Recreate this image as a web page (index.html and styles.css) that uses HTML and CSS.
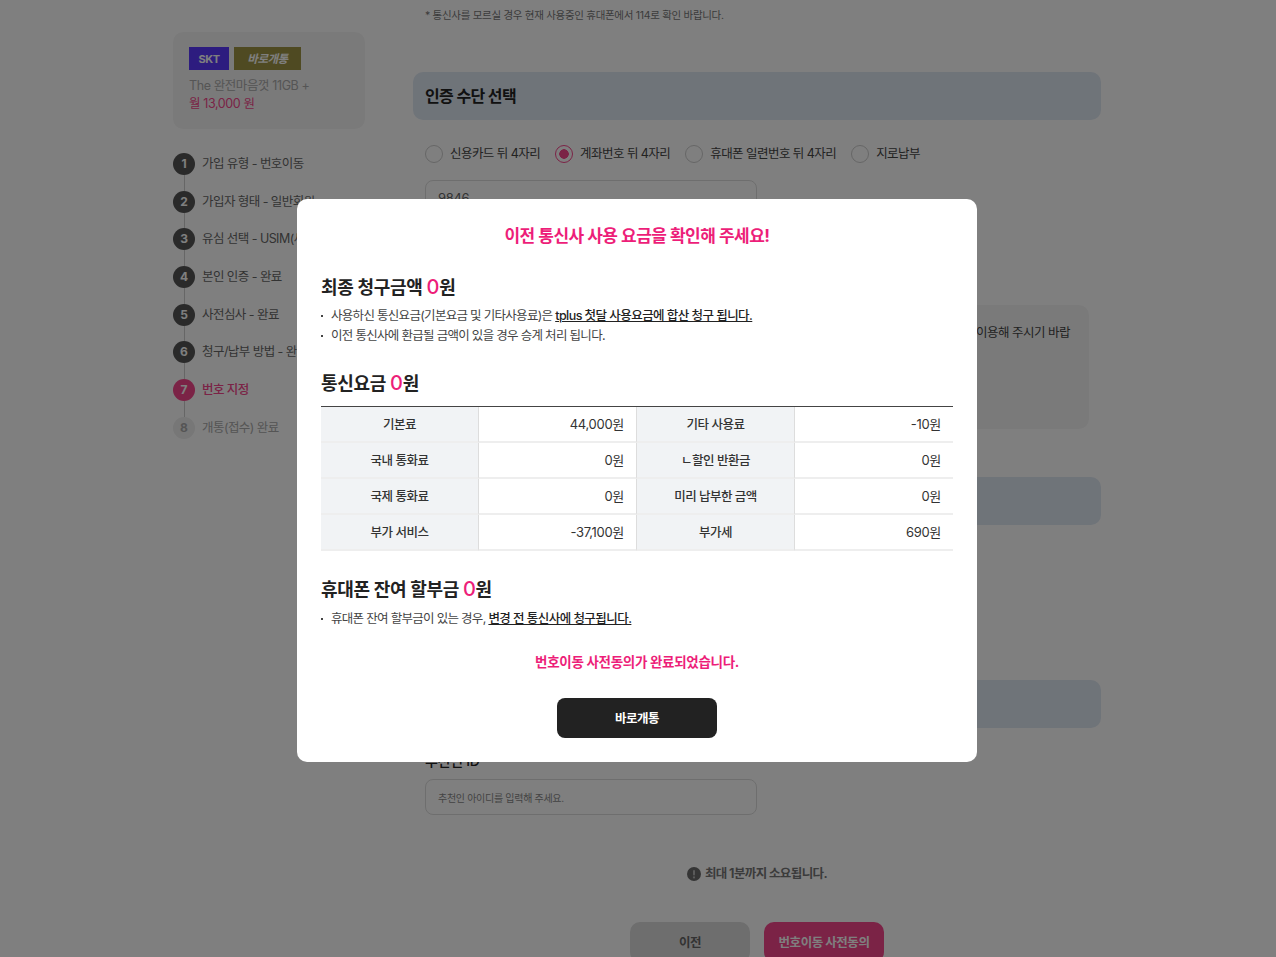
FILE: index.html
```html
<!DOCTYPE html>
<html lang="ko">
<head>
    <meta charset="UTF-8">
    <meta name="viewport" content="width=device-width, initial-scale=1.0">
    <title>번호이동 사전동의</title>
    <link rel="stylesheet" href="styles.css">
</head>
<body>
    <div class="page">
        <aside class="sidebar">
            <div class="plan-card">
                <div class="badges">
                    <span class="badge badge-carrier">SKT</span>
                    <span class="badge badge-type">바로개통</span>
                </div>
                <p class="plan-name">The 완전마음껏 11GB +</p>
                <p class="plan-price">월 13,000 원</p>
            </div>
            <ol class="steps">
                <li class="step"><span class="step-num">1</span>가입 유형 - 번호이동</li>
                <li class="step"><span class="step-num">2</span>가입자 형태 - 일반회원</li>
                <li class="step"><span class="step-num">3</span>유심 선택 - USIM(새 구매)</li>
                <li class="step"><span class="step-num">4</span>본인 인증 - 완료</li>
                <li class="step"><span class="step-num">5</span>사전심사 - 완료</li>
                <li class="step"><span class="step-num">6</span>청구/납부 방법 - 완료</li>
                <li class="step step-active"><span class="step-num">7</span>번호 지정</li>
                <li class="step step-todo"><span class="step-num">8</span>개통(접수) 완료</li>
            </ol>
        </aside>

        <main class="content">
            <p class="note">* 통신사를 모르실 경우 현재 사용중인 휴대폰에서 114로 확인 바랍니다.</p>

            <h2 class="section-bar">인증 수단 선택</h2>
            <div class="radios">
                <label class="radio"><span class="radio-dot"></span>신용카드 뒤 4자리</label>
                <label class="radio radio-on"><span class="radio-dot"></span>계좌번호 뒤 4자리</label>
                <label class="radio"><span class="radio-dot"></span>휴대폰 일련번호 뒤 4자리</label>
                <label class="radio"><span class="radio-dot"></span>지로납부</label>
            </div>
            <div class="field field-value">9846</div>

            <div class="info-box">이용해 주시기 바랍</div>

            <div class="section-bar bar-second"></div>
            <div class="section-bar bar-third"></div>

            <p class="field-label">추천인 ID</p>
            <div class="field field-hint">추천인 아이디를 입력해 주세요.</div>

            <p class="wait-note">
                <svg class="wait-icon" width="14" height="14" viewBox="0 0 14 14">
                    <circle cx="7" cy="7" r="7" fill="#6b6b6b"/>
                    <rect x="6" y="3" width="2" height="5.5" rx="1" fill="#b4b4b4"/>
                    <circle cx="7" cy="10.4" r="1.1" fill="#b4b4b4"/>
                </svg>
                최대 1분까지 소요됩니다.
            </p>

            <div class="page-actions">
                <button class="btn-page btn-prev">이전</button>
                <button class="btn-page btn-next">번호이동 사전동의</button>
            </div>
        </main>
    </div>

    <div class="dim"></div>

    <div class="modal">
        <h2 class="modal-title">이전 통신사 사용 요금을 확인해 주세요!</h2>

        <h3 class="modal-head head-first">최종 청구금액 <em>0</em>원</h3>
        <ul class="dot-list">
            <li>사용하신 통신요금(기본요금 및 기타사용료)은 <u>tplus 첫달 사용요금에 합산 청구 됩니다.</u></li>
            <li>이전 통신사에 환급될 금액이 있을 경우 승계 처리 됩니다.</li>
        </ul>

        <h3 class="modal-head head-fee">통신요금 <em>0</em>원</h3>
        <table class="fee-table">
            <tr>
                <th>기본료</th><td>44,000원</td>
                <th>기타 사용료</th><td>-10원</td>
            </tr>
            <tr>
                <th>국내 통화료</th><td>0원</td>
                <th>ㄴ할인 반환금</th><td>0원</td>
            </tr>
            <tr>
                <th>국제 통화료</th><td>0원</td>
                <th>미리 납부한 금액</th><td>0원</td>
            </tr>
            <tr>
                <th>부가 서비스</th><td>-37,100원</td>
                <th>부가세</th><td>690원</td>
            </tr>
        </table>

        <h3 class="modal-head head-phone">휴대폰 잔여 할부금 <em>0</em>원</h3>
        <ul class="dot-list list-phone">
            <li>휴대폰 잔여 할부금이 있는 경우, <u>변경 전 통신사에 청구됩니다.</u></li>
        </ul>

        <p class="modal-msg">번호이동 사전동의가 완료되었습니다.</p>
        <button class="modal-btn">바로개통</button>
    </div>
</body>
</html>
```

FILE: styles.css
```css
* {
    box-sizing: border-box;
}

html, body {
    height: 100%;
    margin: 0;
    overflow: hidden;
}

body {
    font-family: Inter, "Noto Sans CJK KR", sans-serif;
    background: #fff;
    color: #222;
    letter-spacing: -0.3px;
}

p, h2, h3, ul, ol {
    margin: 0;
    padding: 0;
}

.page {
    display: flex;
    gap: 48px;
    padding-left: 173px;
    height: 957px;
    overflow: hidden;
}

/* sidebar */
.sidebar {
    width: 192px;
    flex: none;
    padding-top: 32px;
}

.plan-card {
    height: 97px;
    padding: 15px 16px;
    background: #f5f5f5;
    border-radius: 10px;
}

.badges {
    display: flex;
    gap: 5px;
    margin-bottom: 7px;
}

.badge {
    height: 23px;
    line-height: 25px;
    text-align: center;
    font-size: 11.5px;
    font-weight: 700;
    color: #fff;
    letter-spacing: -0.5px;
}

.badge-carrier {
    width: 40px;
    background: #5a38ff;
    font-size: 11px;
}

.badge-type {
    width: 67px;
    background: #9e9444;
    font-style: italic;
}

.plan-name, .plan-price {
    font-size: 12.5px;
    line-height: 18px;
    letter-spacing: -0.4px;
}

.plan-name {
    color: #aaa;
}

.plan-price {
    color: #f6468c;
}

.steps {
    list-style: none;
    margin-top: 24px;
}

.step {
    position: relative;
    display: flex;
    align-items: flex-start;
    gap: 7px;
    height: 22px;
    margin-bottom: 15.7px;
    font-size: 12.5px;
    line-height: 22px;
    letter-spacing: -0.55px;
    color: #666;
    white-space: nowrap;
}

.step:not(:last-child)::after {
    content: "";
    position: absolute;
    left: 11px;
    top: 22px;
    width: 1px;
    height: 16px;
    background: #ccc;
}

.step-num {
    width: 22px;
    height: 22px;
    flex: none;
    border-radius: 50%;
    background: #555;
    color: #fff;
    text-align: center;
    font-size: 12px;
    font-weight: 700;
    line-height: 22px;
    letter-spacing: 0;
}

.step-active {
    color: #f6468c;
    font-weight: 500;
}

.step-active .step-num {
    background: #f6468c;
}

.step-todo {
    color: #aaa;
}

.step-todo .step-num {
    background: #eee;
    color: #aaa;
}

/* main column */
.content {
    width: 688px;
    flex: none;
}

.note {
    padding: 9px 0 0 12px;
    font-size: 10.5px;
    line-height: 14px;
    color: #777;
}

.section-bar {
    height: 48px;
    background: #dfe8f3;
    border-radius: 10px;
    padding: 0 12px;
    font-size: 16px;
    font-weight: 700;
    line-height: 48px;
    letter-spacing: -0.6px;
}

.content > .section-bar:first-of-type {
    margin-top: 49px;
}

.radios {
    display: flex;
    gap: 15px;
    margin: 24px 0 0 12px;
    height: 18px;
}

.radio {
    display: flex;
    align-items: flex-start;
    gap: 7px;
    font-size: 12.5px;
    line-height: 20px;
    letter-spacing: -0.55px;
    color: #444;
    white-space: nowrap;
}

.radio-dot {
    width: 18px;
    height: 18px;
    margin-top: 1px;
    border: 1px solid #ccc;
    border-radius: 50%;
    background: #fff;
}

.radio-on .radio-dot {
    border-color: #f6468c;
    background: radial-gradient(circle, #f6468c 0 4.5px, #fff 5px);
}

.field {
    width: 332px;
    height: 36px;
    margin-left: 12px;
    padding-left: 12px;
    border: 1px solid #ddd;
    border-radius: 8px;
    line-height: 34px;
    background: #fff;
}

.field-value {
    margin-top: 18px;
    font-size: 13px;
    color: #666;
}

.field-hint {
    margin-top: 9px;
    font-size: 10px;
    line-height: 36px;
    color: #888;
}

.info-box {
    width: 676px;
    height: 124px;
    margin-top: 89px;
    padding: 17px 19px 0 0;
    background: #f5f5f5;
    border-radius: 10px;
    text-align: right;
    font-size: 12.5px;
    letter-spacing: -0.5px;
    color: #444;
}

.bar-second {
    margin-top: 48px;
}

.bar-third {
    margin-top: 155px;
}

.field-label {
    margin: 24px 0 0 12px;
    font-size: 14px;
    line-height: 18px;
    font-weight: 500;
}

.wait-note {
    display: flex;
    align-items: center;
    justify-content: center;
    gap: 4px;
    margin-top: 48px;
    height: 18px;
    font-size: 12.5px;
    font-weight: 700;
    letter-spacing: -0.6px;
    color: #777;
}

.wait-icon {
    margin-top: 3px;
}

.page-actions {
    display: flex;
    justify-content: center;
    gap: 14px;
    margin-top: 41px;
}

.btn-page {
    width: 120px;
    height: 40px;
    padding: 0 0 2px;
    border: none;
    border-radius: 10px;
    font-family: inherit;
    font-size: 12.5px;
    font-weight: 700;
    letter-spacing: -0.45px;
}

.btn-prev {
    background: #dcdcdc;
    color: #666;
}

.btn-next {
    background: #f6468c;
    color: #fff;
}

/* modal */
.dim {
    position: fixed;
    inset: 0;
    background: rgba(0, 0, 0, 0.5);
}

.modal {
    position: fixed;
    left: 297px;
    top: 199px;
    width: 680px;
    height: 563px;
    padding: 25px 24px 0;
    background: #fff;
    border-radius: 10px;
    text-align: center;
}

.modal-title {
    font-size: 17px;
    line-height: 24px;
    font-weight: 700;
    letter-spacing: -0.5px;
    color: #ed1e79;
}

.modal-head {
    text-align: left;
    font-size: 18px;
    line-height: 24px;
    font-weight: 700;
}

.modal-head em {
    font-style: normal;
    font-size: 20px;
    font-weight: 500;
    line-height: 1;
    color: #ed1e79;
}

.head-first {
    margin-top: 28px;
}

.head-fee {
    margin-top: 26px;
}

.head-phone {
    margin-top: 27px;
}

.dot-list {
    list-style: none;
    margin-top: 6px;
    text-align: left;
}

.list-phone {
    margin-top: 7px;
}

.dot-list li {
    position: relative;
    padding-left: 10px;
    font-size: 12.5px;
    line-height: 20px;
    letter-spacing: -0.7px;
    color: #444;
}

.dot-list li::before {
    content: "";
    position: absolute;
    left: 0;
    top: 9px;
    width: 2px;
    height: 2px;
    background: #444;
}

.dot-list u {
    font-weight: 500;
    letter-spacing: -0.55px;
    color: #222;
}

.fee-table {
    width: 632px;
    margin-top: 10px;
    table-layout: fixed;
    border-collapse: separate;
    border-spacing: 0;
    border-top: 1px solid #444;
    font-size: 12.5px;
    letter-spacing: -0.5px;
}

.fee-table th, .fee-table td {
    height: 36px;
    padding: 0 0 2px;
    border-bottom: 2px solid #eee;
    border-right: 1px solid #ddd;
    color: #333;
}

.fee-table th {
    background: #f1f3f5;
    font-weight: 500;
}

.fee-table td {
    padding-right: 12px;
    text-align: right;
    font-size: 13px;
    font-weight: 400;
    letter-spacing: -0.3px;
}

.fee-table td:last-child {
    border-right: none;
}

.modal-msg {
    margin-top: 23px;
    font-size: 13.5px;
    line-height: 20px;
    font-weight: 700;
    letter-spacing: -0.3px;
    color: #ed1e79;
}

.modal-btn {
    display: block;
    width: 160px;
    height: 40px;
    margin: 26px auto 0;
    padding: 0 0 2px;
    border: none;
    border-radius: 8px;
    background: #222;
    color: #fff;
    font-family: inherit;
    font-size: 12.5px;
    font-weight: 700;
    letter-spacing: -0.5px;
}
```
